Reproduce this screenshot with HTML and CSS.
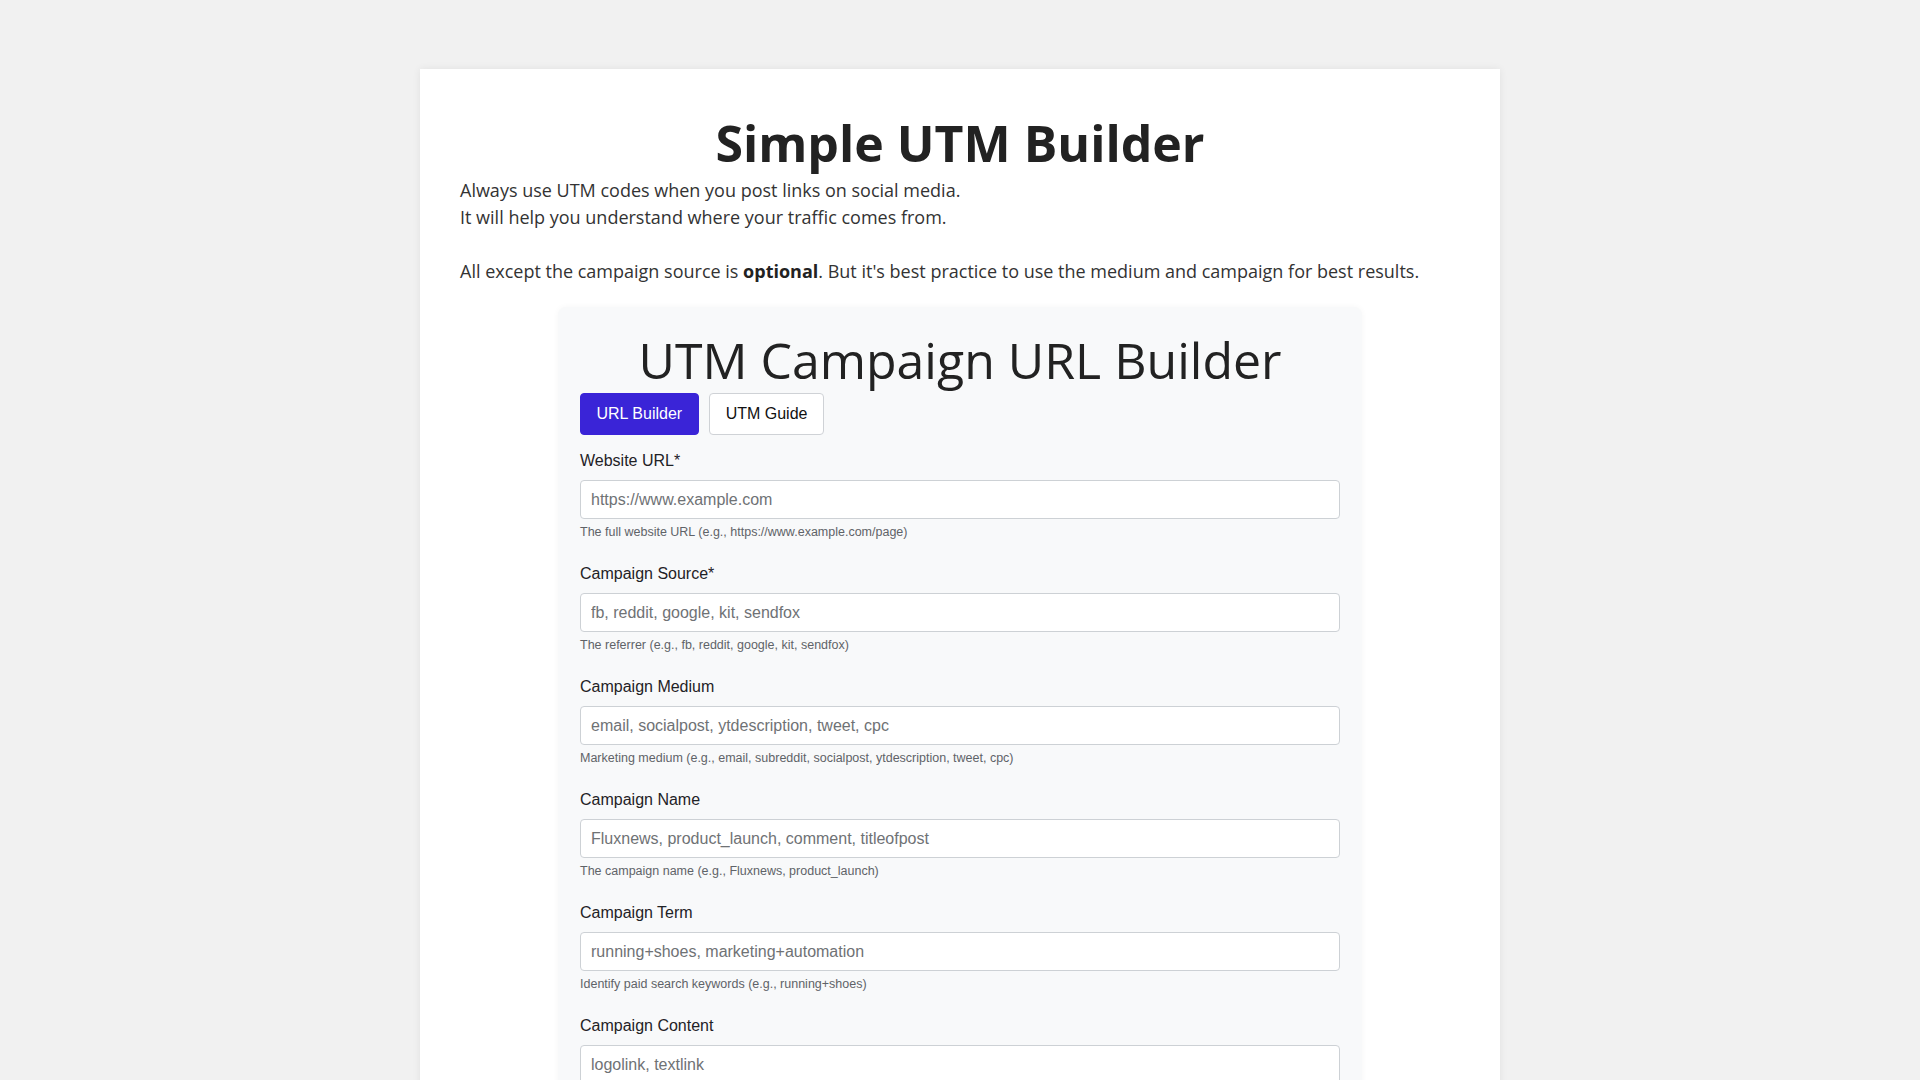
FILE: index.html
```html
<!DOCTYPE html>
<html lang="en">
<head>
<meta charset="utf-8">
<title>Simple UTM Builder</title>
<link rel="stylesheet" href="styles.css">
</head>
<body>
<div class="page">
  <main class="card">
    <h1 class="title">Simple UTM Builder</h1>
    <p class="intro">Always use UTM codes when you post links on social media.<br>It will help you understand where your traffic comes from.<br><br>All except the campaign source is <strong>optional</strong>. But it's best practice to use the medium and campaign for best results.</p>

    <section class="builder">
      <h2 class="builder-title">UTM Campaign URL Builder</h2>
      <div class="tabs">
        <button class="tab tab-active" type="button">URL Builder</button>
        <button class="tab" type="button">UTM Guide</button>
      </div>

      <form class="form">
        <div class="group">
          <label class="label" for="url">Website URL*</label>
          <input class="input" id="url" type="text" placeholder="https://www.example.com">
          <div class="help">The full website URL (e.g., https://www.example.com/page)</div>
        </div>
        <div class="group">
          <label class="label" for="source">Campaign Source*</label>
          <input class="input" id="source" type="text" placeholder="fb, reddit, google, kit, sendfox">
          <div class="help">The referrer (e.g., fb, reddit, google, kit, sendfox)</div>
        </div>
        <div class="group">
          <label class="label" for="medium">Campaign Medium</label>
          <input class="input" id="medium" type="text" placeholder="email, socialpost, ytdescription, tweet, cpc">
          <div class="help">Marketing medium (e.g., email, subreddit, socialpost, ytdescription, tweet, cpc)</div>
        </div>
        <div class="group">
          <label class="label" for="name">Campaign Name</label>
          <input class="input" id="name" type="text" placeholder="Fluxnews, product_launch, comment, titleofpost">
          <div class="help">The campaign name (e.g., Fluxnews, product_launch)</div>
        </div>
        <div class="group">
          <label class="label" for="term">Campaign Term</label>
          <input class="input" id="term" type="text" placeholder="running+shoes, marketing+automation">
          <div class="help">Identify paid search keywords (e.g., running+shoes)</div>
        </div>
        <div class="group">
          <label class="label" for="content">Campaign Content</label>
          <input class="input" id="content" type="text" placeholder="logolink, textlink">
          <div class="help">Use to differentiate ads (e.g., logolink, textlink)</div>
        </div>
        <button class="generate" type="button">Generate URL</button>
      </form>
    </section>
  </main>
</div>
</body>
</html>
```

FILE: styles.css
```css
html, body {
  margin: 0;
  padding: 0;
}

body {
  background: #f1f1f1;
  font-family: "Open Sans", "Liberation Sans", sans-serif;
  color: #333333;
}

.page {
  padding: 69px 0 60px;
}

.card {
  display: block;
  width: 1080px;
  margin: 0 auto;
  box-sizing: border-box;
  padding: 40px;
  background: #ffffff;
  box-shadow: 0 0 8px rgba(0, 0, 0, 0.07);
}

.title {
  margin: 0;
  font-size: 50px;
  line-height: 68px;
  font-weight: 700;
  text-align: center;
  color: #222222;
}

.intro {
  margin: 0 0 22px;
  font-size: 18px;
  line-height: 27px;
  color: #333333;
}

.intro strong {
  font-weight: 700;
  color: #222222;
}

.builder {
  width: 804px;
  margin: 0 auto;
  box-sizing: border-box;
  padding: 20px 22px 22px;
  background: #f8f9fa;
  border-radius: 8px;
  box-shadow: 0 0 6px rgba(0, 0, 0, 0.04);
}

.builder-title {
  margin: 0;
  font-size: 50px;
  line-height: 66px;
  font-weight: 400;
  text-align: center;
  color: #222222;
}

.tabs {
  display: flex;
  gap: 10px;
  margin-bottom: 16px;
}

.tab {
  height: 42px;
  padding: 0 16px;
  font-family: "Liberation Sans", Arial, sans-serif;
  font-size: 16px;
  color: #111111;
  background: #ffffff;
  border: 1px solid #cfd2d6;
  border-radius: 4px;
  cursor: pointer;
}

.tab-active {
  padding: 0 15.5px;
  background: #3a24d7;
  border-color: #3a24d7;
  color: #ffffff;
}

.form {
  display: flex;
  flex-direction: column;
  font-family: "Liberation Sans", Arial, sans-serif;
}

.group {
  display: flex;
  flex-direction: column;
  margin-bottom: 25px;
}

.label {
  font-size: 16px;
  line-height: 19px;
  color: #1f2226;
  margin-bottom: 10px;
}

.input {
  height: 39px;
  box-sizing: border-box;
  padding: 0 10px;
  font-family: "Liberation Sans", Arial, sans-serif;
  font-size: 16px;
  color: #222222;
  background: #ffffff;
  border: 1px solid #cdd1d5;
  border-radius: 4px;
}

.input::placeholder {
  color: #6f7275;
}

.help {
  margin-top: 6px;
  font-size: 12.5px;
  line-height: 14px;
  color: #5f6368;
}

.generate {
  align-self: flex-start;
  height: 42px;
  padding: 0 16px;
  font-family: "Liberation Sans", Arial, sans-serif;
  font-size: 16px;
  color: #ffffff;
  background: #3a24d7;
  border: 1px solid #3a24d7;
  border-radius: 4px;
}
```
